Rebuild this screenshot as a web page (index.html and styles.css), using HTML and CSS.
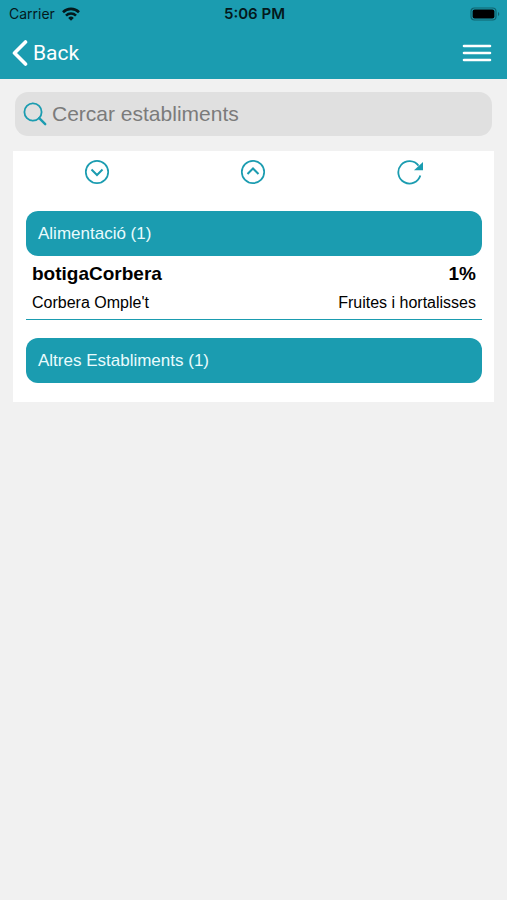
FILE: index.html
```html
<!DOCTYPE html>
<html lang="ca">
<head>
<meta charset="UTF-8">
<meta name="viewport" content="width=device-width, initial-scale=1.0">
<title>Establiments</title>
<link rel="stylesheet" href="styles.css">
</head>
<body>

<header class="header">
  <div class="status">
    <div class="status-left">
      <span>Carrier</span>
      <svg width="18" height="14" viewBox="0 0 18 14" fill="none" stroke="#04191c" stroke-width="2.6">
        <path d="M1 5.2a11.4 11.4 0 0 1 16 0"/>
        <path d="M4 8.6a7.1 7.1 0 0 1 10 0"/>
        <path d="M9 13.8L6.2 10.9a4 4 0 0 1 5.6 0z" fill="#04191c" stroke="none"/>
      </svg>
    </div>
    <span class="time">5:06 PM</span>
    <div class="status-right">
      <svg width="30" height="14" viewBox="0 0 30 14">
        <rect x="1" y="1" width="25" height="12" rx="3.5" fill="none" stroke="#10646f" stroke-width="1.2"/>
        <rect x="2.6" y="2.6" width="21.8" height="8.8" rx="2" fill="#000"/>
        <path d="M28 5v4a2.2 2.2 0 0 0 0-4z" fill="#10646f"/>
      </svg>
    </div>
  </div>
  <nav class="navbar">
    <a href="#" class="back">
      <svg width="16" height="28" viewBox="0 0 16 28" fill="none" stroke="#fff" stroke-width="3.6" stroke-linecap="round" stroke-linejoin="round">
        <path d="M13.5 3L2.5 14l11 11"/>
      </svg>
      Back
    </a>
    <button type="button" class="menu" aria-label="Menu">
      <svg width="30" height="20" viewBox="0 0 30 20" stroke="#fff" stroke-width="2.6" stroke-linecap="round">
        <path d="M2 3h26M2 10h26M2 17h26"/>
      </svg>
    </button>
  </nav>
</header>

<main class="content">
  <label class="search">
    <svg width="24" height="24" viewBox="0 0 24 24" fill="none" stroke="#1b9cb0" stroke-width="1.8" stroke-linecap="round">
      <circle cx="10" cy="10" r="8.6"/>
      <path d="M16.2 16.2l6 6" stroke-width="2.4"/>
    </svg>
    <input type="search" placeholder="Cercar establiments" aria-label="Cercar establiments">
  </label>

  <section class="card">
    <div class="tools">
      <button type="button" aria-label="Expandir">
        <svg width="26" height="26" viewBox="0 0 26 26" fill="none" stroke="#1b9cb0" stroke-width="1.7">
          <circle cx="13" cy="13" r="11.2"/>
          <path d="M7.5 10.5l5.5 5.5 5.5-5.5" stroke-width="2"/>
        </svg>
      </button>
      <button type="button" aria-label="Replegar">
        <svg width="26" height="26" viewBox="0 0 26 26" fill="none" stroke="#1b9cb0" stroke-width="1.7">
          <circle cx="13" cy="13" r="11.2"/>
          <path d="M7.5 15l5.5-5.5 5.5 5.5" stroke-width="2"/>
        </svg>
      </button>
      <button type="button" aria-label="Actualitzar">
        <svg width="26" height="26" viewBox="0 0 26 26" fill="none" stroke="#1b9cb0" stroke-width="1.8">
          <path d="M21.5 6.6A11.2 11.2 0 1 0 23.3 16.4"/>
          <path d="M26 3v8.2h-9z" fill="#1b9cb0" stroke="none"/>
        </svg>
      </button>
    </div>

    <button type="button" class="category">Alimentació (1)</button>
    <a href="#" class="shop">
      <span class="row name"><span>botigaCorbera</span><span>1%</span></span>
      <span class="row"><span>Corbera Omple't</span><span>Fruites i hortalisses</span></span>
    </a>

    <button type="button" class="category">Altres Establiments (1)</button>
  </section>
</main>

</body>
</html>
```
FILE: styles.css
```css
* {
  box-sizing: border-box;
}

body {
  margin: 0;
  min-height: 100vh;
  background-color: #f1f1f1;
  color: #000;
  font-family: "Liberation Sans", Arial, sans-serif;
}

svg {
  display: block;
}

button {
  padding: 0;
  border: none;
  background: none;
  font-family: inherit;
  cursor: pointer;
}

.header {
  background-color: #1b9cb0;
}

.status {
  display: grid;
  grid-template-columns: 1fr auto 1fr;
  align-items: center;
  height: 27px;
  padding: 0 7px 0 9px;
  color: #04191c;
  font-family: Inter, sans-serif;
  font-size: 14px;
}

.status-left {
  display: flex;
  align-items: center;
  gap: 7px;
}

.status-right {
  display: flex;
  justify-content: flex-end;
}

.time {
  font-size: 15px;
  font-weight: 600;
}

.navbar {
  display: flex;
  justify-content: space-between;
  align-items: center;
  height: 52px;
  padding: 0 15px 0 12px;
}

.back {
  display: flex;
  align-items: center;
  gap: 5px;
  color: #fff;
  font-family: Roboto, sans-serif;
  font-size: 21px;
  text-decoration: none;
}

.content {
  padding: 13px;
}

.search {
  display: flex;
  align-items: center;
  gap: 5px;
  height: 44px;
  margin: 0 2px 15px;
  padding: 0 8px;
  border-radius: 13px;
  background-color: #e0e0e0;
}

.search input {
  flex: 1;
  min-width: 0;
  padding: 0;
  border: none;
  outline: none;
  background: none;
  font-family: inherit;
  font-size: 21px;
}

.search input::placeholder {
  color: #7b7b7b;
}

.card {
  padding-bottom: 19px;
  background-color: #fff;
}

.tools {
  display: grid;
  grid-template-columns: repeat(3, 1fr);
  justify-items: center;
  padding: 8px 6px 26px;
}

.category {
  display: block;
  width: calc(100% - 25px);
  height: 45px;
  margin: 0 12px 0 13px;
  padding: 0 12px;
  border-radius: 12px;
  background-color: #1b9cb0;
  color: #e9fbfd;
  font-size: 17px;
  text-align: left;
}

.shop {
  display: flex;
  flex-direction: column;
  gap: 3px;
  margin: 0 12px 18px 13px;
  padding: 5px 6px 3px;
  border-bottom: 1px solid #1b9cb0;
  color: #000;
  text-decoration: none;
}

.row {
  display: flex;
  justify-content: space-between;
  gap: 12px;
  font-size: 16px;
  line-height: 26px;
}

.name {
  font-size: 19px;
  font-weight: bold;
}
```
